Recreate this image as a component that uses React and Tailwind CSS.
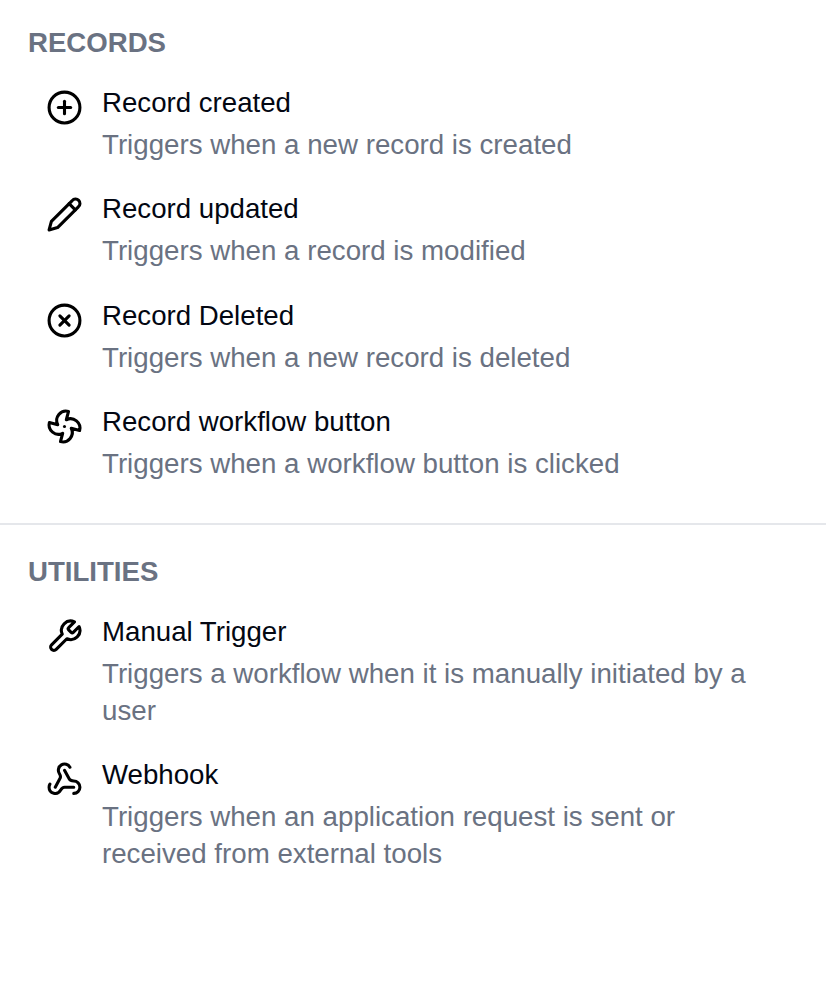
import { CirclePlus, CircleX, Fan, Webhook } from "lucide-react";

function Pencil({ className }) {
  return (
    <svg viewBox="0 0 24 24" fill="none" stroke="currentColor" strokeWidth="2" strokeLinecap="round" strokeLinejoin="round" className={className}>
      <path d="M17 3a2.85 2.83 0 1 1 4 4L7.5 20.5 2 22l1.5-5.5Z" />
      <path d="m15 5 4 4" />
    </svg>
  );
}

function Wrench({ className }) {
  return (
    <svg viewBox="0 0 24 24" fill="none" stroke="currentColor" strokeWidth="2" strokeLinecap="round" strokeLinejoin="round" className={className}>
      <path d="M14.7 6.3a1 1 0 0 0 0 1.4l1.6 1.6a1 1 0 0 0 1.4 0l3.77-3.77a6 6 0 0 1-7.94 7.94l-6.91 6.91a2.12 2.12 0 0 1-3-3l6.91-6.91a6 6 0 0 1 7.94-7.94l-3.76 3.76z" />
    </svg>
  );
}

const sections = [
  {
    title: "RECORDS",
    items: [
      { icon: CirclePlus, title: "Record created", text: "Triggers when a new record is created" },
      { icon: Pencil, title: "Record updated", text: "Triggers when a record is modified" },
      { icon: CircleX, title: "Record Deleted", text: "Triggers when a new record is deleted" },
      { icon: Fan, title: "Record workflow button", text: "Triggers when a workflow button is clicked" },
    ],
  },
  {
    title: "UTILITIES",
    items: [
      { icon: Wrench, title: "Manual Trigger", text: "Triggers a workflow when it is manually initiated by a user" },
      { icon: Webhook, title: "Webhook", text: "Triggers when an application request is sent or received from external tools" },
    ],
  },
];

function Trigger({ icon: Icon, title, text }) {
  return (
    <li className="flex gap-[19px]">
      <Icon className="mt-[5.3px] size-[37px] shrink-0 text-black" />
      <div>
        <h3 className="text-[27.65px] leading-[37px]">{title}</h3>
        <p className="mt-[5px] text-[27.7px] leading-[37px] text-gray-500">{text}</p>
      </div>
    </li>
  );
}

export default function App() {
  return (
    <main className="h-[1001px] w-[828px] bg-white pr-0.5 font-['Liberation_Sans',sans-serif] text-gray-950">
      {sections.map((section) => (
        <section key={section.title} className="border-b-2 border-gray-200 px-7 pt-7 pb-[41px] first:pt-6 last:border-b-0">
          <h2 className="text-[27.6px] leading-[37px] font-bold text-gray-500">{section.title}</h2>
          <ul className="mt-[23px] flex flex-col gap-[27.3px] pr-8 pl-[18px]">
            {section.items.map((item) => (
              <Trigger key={item.title} {...item} />
            ))}
          </ul>
        </section>
      ))}
    </main>
  );
}
